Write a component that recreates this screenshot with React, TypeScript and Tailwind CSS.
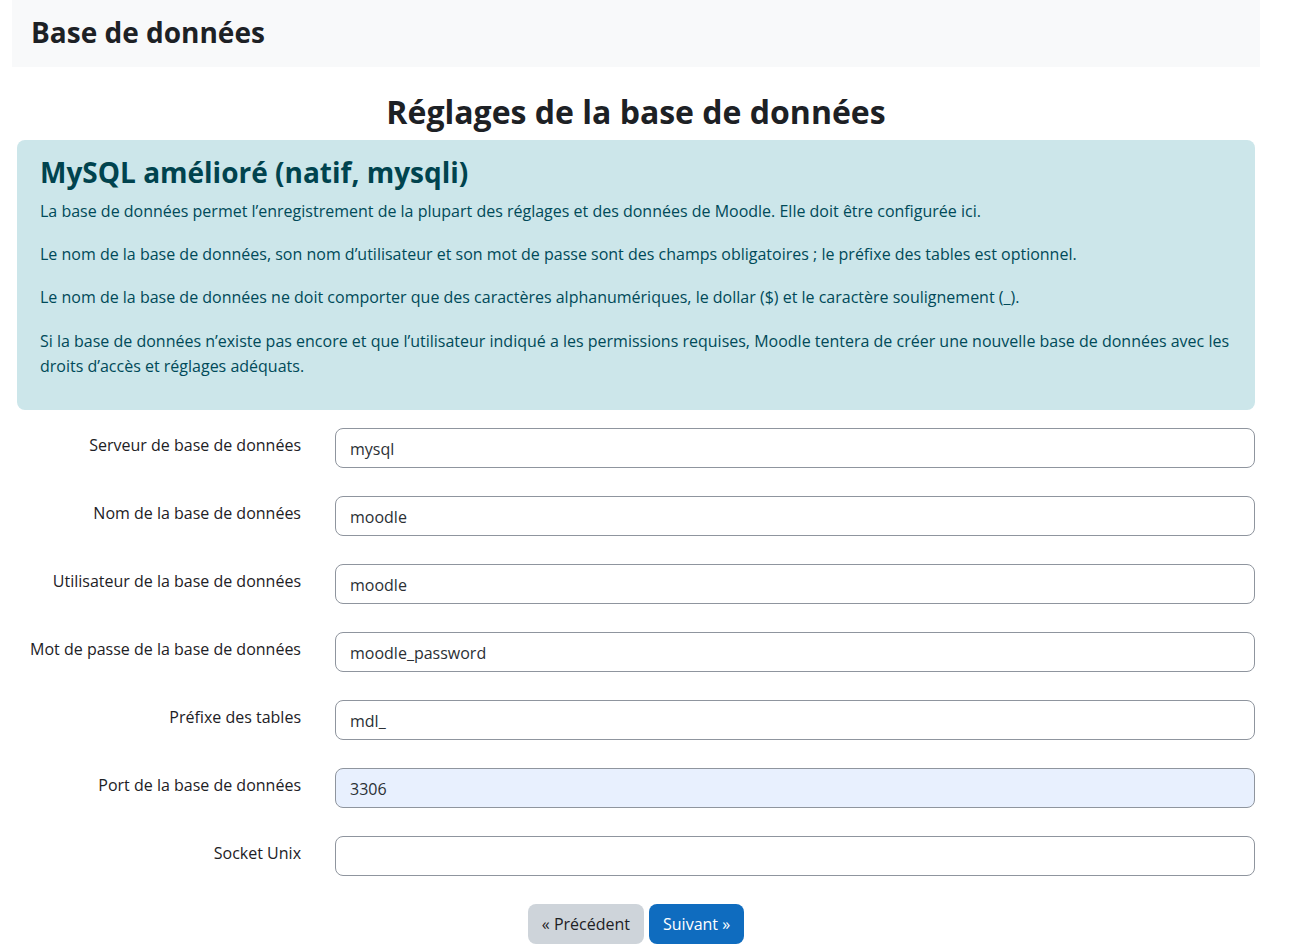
import React from 'react';

const fields = [
    { label: 'Serveur de base de données', value: 'mysql' },
    { label: 'Nom de la base de données', value: 'moodle' },
    { label: 'Utilisateur de la base de données', value: 'moodle' },
    { label: 'Mot de passe de la base de données', value: 'moodle_password' },
    { label: 'Préfixe des tables', value: 'mdl_' },
    { label: 'Port de la base de données', value: '3306', filled: true },
    { label: 'Socket Unix', value: '' },
];

export default function App() {
    return (
        <div className="min-h-screen bg-white text-[#1d2125] text-[16px]" style={{ fontFamily: '"Open Sans", "Noto Sans", sans-serif' }}>
            <div className="w-[1248px] ml-3">
                <div className="bg-[#f8f9fa] h-[67px] flex items-center px-[19px] pb-[4px]">
                    <h1 className="text-[28px] font-bold leading-none">Base de données</h1>
                </div>

                <h2 className="text-center text-[32px] font-bold mt-[25px] leading-[40px]">Réglages de la base de données</h2>

                <div className="px-[5px]">
                    <div className="mt-[8px] bg-[#cce6ea] text-[#004a59] rounded-lg px-[23px] pt-[14px] pb-[31px]">
                        <h3 className="text-[28px] font-bold leading-[36px] text-[#00434e] mb-[9px]">MySQL amélioré (natif, mysqli)</h3>
                        <p className="leading-[25px] mb-[18px]">La base de données permet l’enregistrement de la plupart des réglages et des données de Moodle. Elle doit être configurée ici.</p>
                        <p className="leading-[25px] mb-[18px]">Le nom de la base de données, son nom d’utilisateur et son mot de passe sont des champs obligatoires ; le préfixe des tables est optionnel.</p>
                        <p className="leading-[25px] mb-[19px]">Le nom de la base de données ne doit comporter que des caractères alphanumériques, le dollar ($) et le caractère soulignement (_).</p>
                        <p className="leading-[25px]">Si la base de données n’existe pas encore et que l’utilisateur indiqué a les permissions requises, Moodle tentera de créer une nouvelle base de données avec les droits d’accès et réglages adéquats.</p>
                    </div>

                    <div className="mt-[18px] flex flex-col gap-[28px]">
                        {fields.map(f => (
                            <div key={f.label} className="flex items-start">
                                <label className="w-[284px] text-right pt-[5px] leading-[25px]">{f.label}</label>
                                <div className="ml-[34px] flex-1">
                                    <input
                                        type="text"
                                        readOnly
                                        value={f.value}
                                        className={`w-full h-[40px] rounded-lg border border-[#8f959e] px-[14px] pt-[2px] text-[16px] text-[#2b3035] outline-none ${f.filled ? 'bg-[#e8f0fe]' : 'bg-white'}`}
                                    />
                                </div>
                            </div>
                        ))}
                    </div>

                    <div className="mt-[28px] flex justify-center gap-[5px]">
                        <button className="h-[40px] px-[14px] rounded-lg bg-[#ced4da] text-[#1d2125]">« Précédent</button>
                        <button className="h-[40px] px-[14px] rounded-lg bg-[#0f6cbf] text-white">Suivant »</button>
                    </div>
                </div>
            </div>
        </div>
    );
}
